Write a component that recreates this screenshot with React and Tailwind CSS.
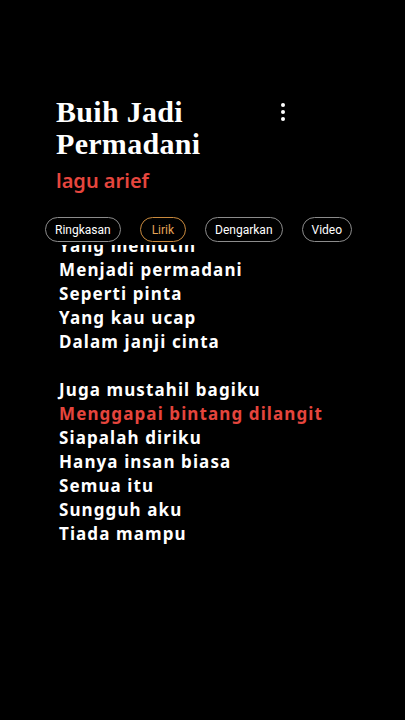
const lyrics = [
  { text: "Yang memutih" },
  { text: "Menjadi permadani" },
  { text: "Seperti pinta" },
  { text: "Yang kau ucap" },
  { text: "Dalam janji cinta" },
  { text: "" },
  { text: "Juga mustahil bagiku" },
  { text: "Menggapai bintang dilangit", active: true },
  { text: "Siapalah diriku" },
  { text: "Hanya insan biasa" },
  { text: "Semua itu" },
  { text: "Sungguh aku" },
  { text: "Tiada mampu" },
];

const tabs = ["Ringkasan", "Lirik", "Dengarkan", "Video"];

export default function App() {
  return (
    <div className="h-[720px] w-full overflow-hidden bg-black">
      <div className="flex items-start justify-between pl-[56px] pr-[120px] pt-[96px]">
        <h1 className="text-[30px] font-black leading-[32px] tracking-[0.3px] text-white [font-family:'Liberation_Serif',serif]">
          Buih Jadi
          <br />
          Permadani
        </h1>
        <div className="mt-[7px] flex flex-col items-center gap-[3px]">
          <span className="h-[4px] w-[4px] rounded-full bg-white" />
          <span className="h-[4px] w-[4px] rounded-full bg-white" />
          <span className="h-[4px] w-[4px] rounded-full bg-white" />
        </div>
      </div>
      <p className="mt-[7px] pl-[56px] text-[20px] font-semibold leading-[28px] text-[#e6463e] [font-family:'Noto_Sans',sans-serif]">
        lagu arief
      </p>
      <div className="mt-[22px] flex items-center gap-[19px] pl-[45px] [font-family:Roboto,sans-serif]">
        {tabs.map((t) => (
          <div
            key={t}
            className={
              t === "Lirik"
                ? "flex h-[25px] items-center rounded-full border border-[#c98a3e] px-[11px] text-[12px] text-[#e3a356]"
                : "flex h-[25px] items-center rounded-full border border-[#8c8c8c] px-[9px] text-[12px] text-white"
            }
          >
            {t}
          </div>
        ))}
      </div>
      <div className="mt-[3px] h-[320px] overflow-hidden pl-[59px]">
        <div className="-mt-[11px] [font-family:'Noto_Sans',sans-serif]">
          {lyrics.map((l, i) => (
            <p
              key={i}
              className={
                "h-[24px] text-[17px] font-bold leading-[24px] tracking-[1.1px] " +
                (l.active ? "text-[#e5453d]" : "text-white")
              }
            >
              {l.text}
            </p>
          ))}
        </div>
      </div>
    </div>
  );
}
